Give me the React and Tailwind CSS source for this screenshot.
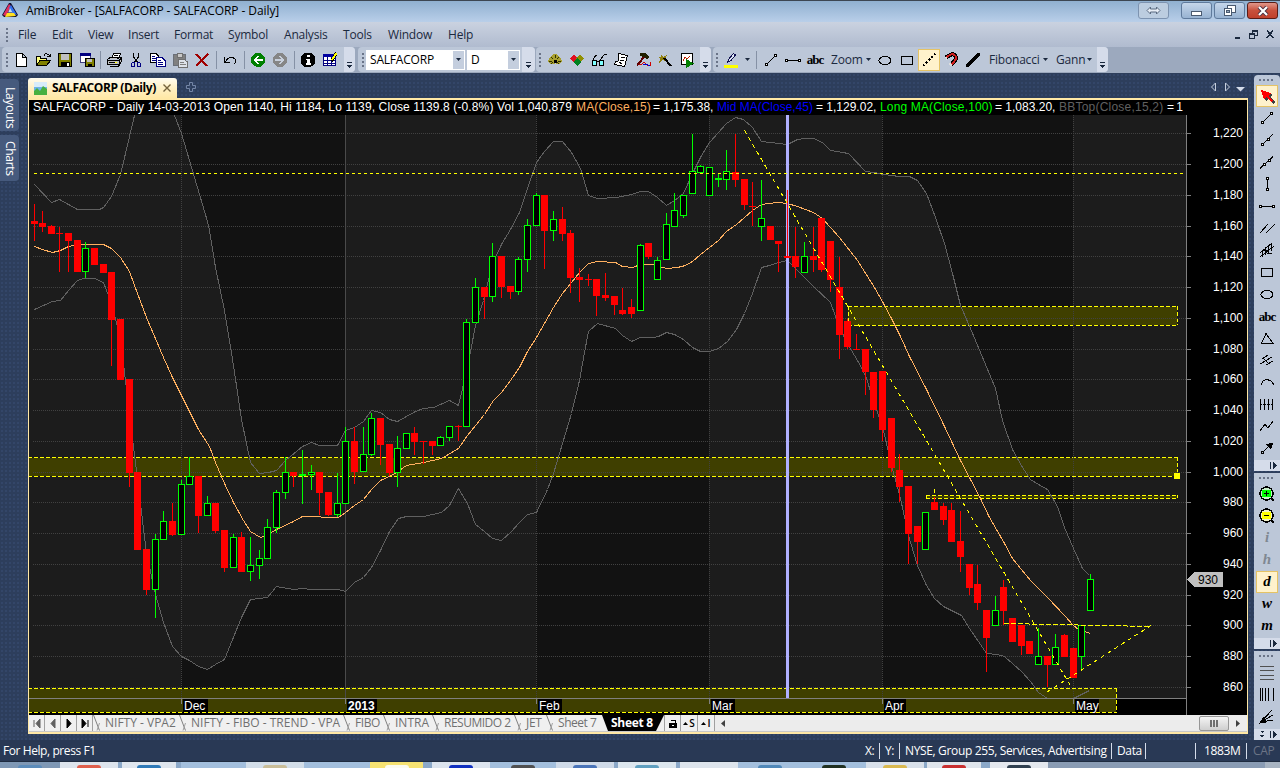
import React from 'react';

const PITCH = 8.659;

// kind, high, body top, body bottom, low
const CANDLES = [
  ['r', 204, 221, 224, 241], ['r', 211, 223, 227, 232], ['r', 225, 226, 234, 234], ['r', 227, 233, 234, 272],
  ['r', 233, 233, 241, 272], ['r', 240, 240, 272, 272], ['g', 242, 248, 272, 278], ['r', 248, 248, 265, 265],
  ['r', 264, 264, 273, 273], ['r', 272, 272, 320, 366], ['r', 319, 319, 380, 380], ['r', 379, 379, 473, 487],
  ['r', 472, 472, 550, 550], ['r', 549, 549, 590, 595], ['g', 534, 539, 590, 618], ['g', 511, 521, 540, 540],
  ['r', 503, 521, 535, 536], ['g', 480, 484, 535, 535], ['g', 457, 476, 485, 485], ['r', 476, 476, 516, 533],
  ['g', 496, 503, 516, 516], ['r', 503, 503, 531, 533], ['r', 530, 530, 568, 572], ['g', 534, 537, 568, 568],
  ['r', 532, 537, 572, 572], ['g', 537, 565, 572, 581], ['g', 550, 558, 566, 579], ['g', 519, 527, 559, 559],
  ['g', 490, 492, 528, 533], ['g', 457, 472, 493, 499], ['r', 472, 472, 476, 487], ['g', 450, 474, 476, 504],
  ['g', 465, 472, 475, 490], ['r', 472, 472, 493, 515], ['r', 492, 492, 515, 516], ['g', 473, 503, 515, 517],
  ['g', 427, 441, 504, 504], ['r', 427, 441, 472, 484], ['g', 427, 454, 472, 472], ['g', 413, 418, 455, 456],
  ['r', 418, 418, 445, 465], ['r', 444, 444, 473, 476], ['g', 436, 448, 473, 487], ['g', 433, 433, 449, 449],
  ['r', 427, 433, 442, 455], ['r', 441, 441, 442, 464], ['r', 441, 441, 446, 455], ['g', 436, 437, 446, 446],
  ['g', 426, 426, 438, 441], ['r', 425, 426, 427, 441], ['g', 319, 322, 427, 427], ['g', 278, 287, 323, 323],
  ['r', 287, 287, 297, 319], ['g', 243, 256, 297, 302], ['r', 256, 256, 287, 298], ['r', 286, 286, 292, 299],
  ['g', 257, 259, 292, 295], ['g', 219, 225, 260, 272], ['g', 193, 195, 226, 226], ['r', 195, 195, 231, 269],
  ['g', 211, 219, 231, 241], ['r', 207, 219, 234, 241], ['r', 230, 233, 278, 293], ['r', 268, 277, 280, 302],
  ['r', 274, 279, 280, 286], ['r', 279, 279, 296, 316], ['r', 273, 295, 298, 301], ['r', 296, 296, 305, 315],
  ['r', 288, 310, 314, 315], ['r', 299, 307, 314, 318], ['g', 244, 245, 311, 311], ['r', 243, 243, 257, 259],
  ['g', 257, 260, 280, 280], ['g', 213, 224, 260, 260], ['g', 193, 210, 227, 227], ['g', 195, 195, 216, 218],
  ['g', 134, 171, 194, 194], ['g', 165, 166, 173, 173], ['g', 167, 167, 196, 196], ['g', 174, 178, 180, 187],
  ['g', 150, 171, 180, 190], ['r', 134, 172, 180, 187], ['r', 179, 179, 205, 210], ['r', 182, 206, 207, 226],
  ['g', 180, 218, 227, 241], ['r', 226, 226, 240, 240], ['r', 241, 241, 244, 272], ['r', 190, 256, 258, 258],
  ['r', 227, 256, 267, 278], ['g', 242, 256, 273, 273], ['r', 227, 256, 260, 272], ['r', 218, 218, 270, 272],
  ['r', 241, 241, 280, 292], ['r', 257, 287, 335, 359], ['r', 319, 321, 347, 349], ['r', 334, 349, 350, 350],
  ['r', 349, 349, 372, 395], ['r', 372, 372, 410, 418], ['r', 371, 371, 430, 441], ['r', 418, 418, 468, 472],
  ['r', 454, 470, 487, 502], ['r', 486, 486, 534, 564], ['r', 526, 526, 542, 564], ['g', 512, 512, 550, 550],
  ['r', 497, 502, 510, 510], ['r', 503, 506, 520, 525], ['r', 503, 510, 542, 542], ['r', 511, 541, 557, 572],
  ['r', 564, 564, 588, 595], ['r', 565, 584, 603, 610], ['r', 610, 610, 638, 672], ['g', 596, 610, 626, 626],
  ['r', 580, 587, 611, 625], ['r', 618, 618, 642, 642], ['r', 625, 625, 646, 655], ['r', 641, 641, 654, 654],
  ['g', 628, 656, 665, 665], ['r', 656, 656, 665, 687], ['g', 634, 647, 665, 665], ['r', 634, 635, 657, 657],
  ['r', 648, 648, 678, 678], ['g', 625, 625, 657, 670], ['g', 574, 579, 611, 611],
];

const UPPER =
  '34,184 51,202 59,199 77,209 99,209 103,207 111,196 120,174 134,115 140,90 165,90 174,115 181,133 189,160 207,221 209,230 215,267 224,310 233,365 241,419 250,462 259,473 268,472 276,470 285,460 302,446 311,442 319,445 337,445 345,430 354,427 363,421 371,410 380,412 389,419 397,421 415,411 423,408 433,407 449,400 458,405 467,367 475,325 483,300 492,263 501,244 510,229 519,212 527,188 536,162 544,151 553,141 562,141 571,152 580,168 588,195 597,198 616,197 631,194 640,191 648,191 657,197 666,205 674,200 683,193 692,173 700,157 709,142 718,132 726,123 735,117 743,119 752,127 761,141 770,142 787,144 797,139 805,138 813,138 822,142 830,150 848,153 865,171 874,172 883,174 899,176 909,176 917,180 926,193 935,217 944,243 952,273 960,305 970,328 980,352 995,388 1002,420 1012,449 1022,467 1030,479 1038,484 1047,489 1057,506 1064,527 1073,548 1082,568 1089,575';

const LOWER =
  '34,309 52,301 60,300 68,290 77,280 83,278 94,278 103,282 111,303 120,338 129,414 137,478 146,553 155,594 163,622 172,646 181,656 189,660 198,666 207,669 215,664 224,659 241,617 250,599 267,597 276,586 293,589 303,588 310,589 338,589 345,591 354,582 363,577 371,567 380,550 389,531 398,518 406,516 423,516 432,514 441,512 449,505 458,488 467,503 475,524 484,531 492,538 501,540 510,532 519,522 527,514 536,512 547,489 553,473 562,443 571,413 579,380 584,352 588,331 597,323 615,328 622,335 631,341 640,337 653,337 658,336 666,332 674,334 683,339 692,347 700,351 709,351 718,348 727,341 736,329 744,313 752,293 761,267 769,265 778,262 787,260 797,270 813,286 830,302 839,327 848,345 857,360 865,375 874,403 883,430 891,465 900,498 908,535 917,565 926,585 934,598 943,606 953,611 961,615 969,628 978,641 986,653 997,654 1004,656 1013,664 1021,671 1030,681 1038,692 1047,698 1060,703 1073,698 1089,690';

const AVERAGE =
  '34,246 42,249 52,252 60,250 68,246 73,245 83,244 103,244 111,248 120,257 129,271 137,293 146,317 163,357 172,377 181,395 189,411 198,429 209,446 215,462 224,483 233,502 243,520 250,531 260,537 267,534 276,529 293,521 302,516 338,517 345,512 354,505 363,499 371,489 380,480 393,474 406,465 423,462 441,458 458,448 467,435 484,414 493,400 501,392 510,380 519,367 527,351 536,337 553,307 562,293 571,282 579,272 588,263 597,261 615,262 622,266 632,267 640,264 652,264 666,268 677,267 685,265 692,261 700,254 709,247 718,240 726,231 736,224 752,210 761,204 777,202 787,203 797,206 813,212 822,218 830,227 839,237 857,260 874,287 883,303 891,318 900,336 909,356 926,389 944,426 960,460 980,498 988,515 1004,543 1012,558 1021,569 1030,580 1038,588 1047,597 1064,615 1073,625 1078,629 1090,633';

const PRICES = [
  ['1,220', 133], ['1,200', 164], ['1,180', 195], ['1,160', 226], ['1,140', 256], ['1,120', 287], ['1,100', 318],
  ['1,080', 349], ['1,060', 379], ['1,040', 410], ['1,020', 441], ['1,000', 472], ['980', 502], ['960', 533],
  ['940', 564], ['920', 595], ['900', 625], ['880', 656], ['860', 687],
];

const MONTHS = [['Dec', 181, 25], ['2013', 345, 30], ['Feb', 536, 24], ['Mar', 709, 24], ['Apr', 882, 22], ['May', 1073, 24]];

const Zone = ({ x1, x2, y1, y2, open }) => (
  <g>
    <rect x={x1} y={y1 + 1} width={x2 - x1} height={y2 - y1 - 1} fill="#3f3f00" />
    <path
      d={`M${x1} ${y1 + 0.5}H${x2 + 1}M${x1} ${y2 + 0.5}H${x2 + 1}M${x2 + 0.5} ${y1}V${y2}${open ? '' : `M${x1 + 0.5} ${y1}V${y2}`}`}
      stroke="#ffff00"
      strokeDasharray="4 2"
      fill="none"
    />
  </g>
);

const Candle = ({ index, data }) => {
  const [kind, high, top, bottom, low] = data;
  const x = Math.floor(34 + PITCH * index);
  if (kind === 'r') {
    return (
      <g fill="#ff0000">
        <rect x={x} y={high} width="1" height={Math.max(low - high, 1)} />
        <rect x={x - 3} y={top} width="7" height={bottom - top} />
      </g>
    );
  }
  return (
    <g>
      <rect x={x} y={high} width="1" height={low - high} fill="#00ff00" />
      <rect x={x - 3} y={top} width="7" height={bottom - top} fill="#00ff00" />
      <rect x={x - 2} y={top + 1} width="5" height={Math.max(bottom - top - 2, 0)} fill="#000" />
    </g>
  );
};

const Chart = () => (
  <svg width="1218" height="600" viewBox="29 115 1218 600" shapeRendering="crispEdges" className="block shrink-0">
    <rect x="29" y="115" width="1218" height="600" fill="#000" />
    <rect x="29" y="115" width="1158" height="583" fill="#1c1c1c" />
    <rect x="181" y="115" width="164" height="583" fill="#121212" />
    <rect x="536" y="115" width="173" height="583" fill="#121212" />
    <rect x="882" y="115" width="191" height="583" fill="#121212" />
    <polygon points={`${UPPER} ${LOWER.split(' ').reverse().join(' ')}`} fill="#1c1c1c" />
    <rect x="29" y="698" width="1218" height="17" fill="#000" />

    <Zone x1={28} x2={1177} y1={457} y2={476} open />
    <Zone x1={848} x2={1177} y1={306} y2={325} />
    <Zone x1={926} x2={1177} y1={495} y2={498} />
    <Zone x1={28} x2={1116} y1={688} y2={712} open />

    <g stroke="#414141" strokeDasharray="1 1">
      {PRICES.map(([label, y]) => (
        <path key={label} d={`M33 ${y + 0.5}H1186`} />
      ))}
      {MONTHS.filter(([label]) => label !== '2013').map(([label, x]) => (
        <path key={label} d={`M${x + 0.5} 115V698`} />
      ))}
    </g>
    <path d="M345.5 115V698" stroke="#4a4a4a" />

    <g transform="translate(.5 .5)" fill="none">
      <polyline points={UPPER} stroke="#606060" />
      <polyline points={LOWER} stroke="#606060" />
      <polyline points={AVERAGE} stroke="#ffb060" />
    </g>
    <rect x="29" y="699" width="1087" height="13" fill="#3f3f00" />
    <rect x="786" y="115" width="3" height="583" fill="#b0b0ff" />
    {CANDLES.map((data, i) => (
      <Candle key={i} index={i} data={data} />
    ))}

    <g stroke="#ffff00" fill="none">
      <path d="M34 173.5H1186" strokeDasharray="3 3" />
      <path d="M744.5 130.5L1070 685" strokeDasharray="4 4" />
      <path d="M1004 623.5L1151 626.5" strokeDasharray="5 2" />
      <path d="M1047 692L1151 625.5" strokeDasharray="4 4" />
      <path d="M934.5 489V493" />
    </g>
    <rect x="1174" y="473" width="6" height="6" fill="#ffff00" />

    <g stroke="#808080" fill="none">
      <path d="M29 698.5H1187M1186.5 115V715" />
      {PRICES.map(([label, y]) => (
        <path key={label} d={`M1187 ${y + 0.5}H1191`} />
      ))}
      {MONTHS.map(([label, x]) => (
        <path key={label} d={`M${x + 0.5} 699V704`} />
      ))}
    </g>

    <g fill="#fff" fontFamily="Liberation Sans, sans-serif" fontSize="12">
      {PRICES.map(([label, y]) => (
        <text key={label} x="1243" y={y + 4} textAnchor="end">
          {label}
        </text>
      ))}
      {MONTHS.map(([label, x, w]) => (
        <g key={label}>
          <rect x={x + 2} y="699" width={w} height="13" fill="#000" />
          <text x={x + 3} y="710" fontWeight={label === '2013' ? 700 : 400}>
            {label}
          </text>
        </g>
      ))}
    </g>
    <path d="M1187 579.5L1195 572H1223V587H1195Z" fill="#c0c0c0" />
    <text x="1198" y="584" fill="#000" fontFamily="Liberation Sans, sans-serif" fontSize="12">
      930
    </text>
  </svg>
);

const ICONS = {
  new: <path d="M3.5 1.5H9.5L13.5 5.5V14.5H3.5ZM9.5 1.5V5.5H13.5" fill="#fff" stroke="#000" />,
  open: (
    <>
      <path d="M1.5 13.5V4.5H5.5V6.5H11.5V8.5" fill="#ffff80" stroke="#000" />
      <path d="M1.5 13.5L5 8.5H15.5L11.5 13.5Z" fill="#808000" stroke="#000" />
      <path d="M9 3.5C10 1 13 1 14.5 4M12 4.5H15V1.5" fill="none" stroke="#000" />
    </>
  ),
  save: (
    <>
      <rect x="1.5" y="1.5" width="13" height="13" fill="#808000" stroke="#000" />
      <rect x="4" y="2" width="8" height="6" fill="#c0c0c0" />
      <rect x="4" y="10" width="9" height="4" fill="#000" />
      <rect x="10" y="11" width="2" height="3" fill="#fff" />
    </>
  ),
  saveAll: (
    <>
      <rect x="1.5" y="1.5" width="10" height="9" fill="#fff" stroke="#404080" />
      <rect x="1" y="1" width="11" height="3" fill="#000080" />
      <rect x="6.5" y="6.5" width="9" height="8" fill="#808000" stroke="#000" />
      <rect x="8" y="7" width="5" height="3" fill="#c0c0c0" />
      <rect x="9" y="12" width="4" height="3" fill="#000" />
    </>
  ),
  print: (
    <>
      <path d="M5.5 6.5L7.5 1.5H14.5L12.5 6.5Z" fill="#fff" stroke="#000" />
      <path d="M1.5 7.5L4 5.5H15L13.5 8.5H1.5V12.5H13.5L15.5 9V6M13.5 8.5V12.5" fill="#c0c0c0" stroke="#000" />
      <path d="M8 3.5H12M7 5H11M3.5 14.5H12L14 12.5M3 10.5H11" stroke="#000" fill="none" />
      <rect x="9" y="10" width="2" height="1" fill="#ffff00" />
    </>
  ),
  cut: (
    <>
      <path d="M5.5 1V5L9.5 10M10.5 1V5L6.5 10" stroke="#000" fill="none" />
      <path d="M4.5 10.5H6.5V14.5H3.5V11.5ZM9.5 10.5H11.5L12.5 12V14.5H9.5Z" stroke="#000080" fill="none" />
    </>
  ),
  copy: (
    <>
      <path d="M.5 1.5H6L8.5 4V10.5H.5Z" fill="#fff" stroke="#000" />
      <path d="M2 4.5H5M2 6.5H6M2 8.5H6" stroke="#000080" />
      <path d="M6.5 5.5H12L15.5 9V14.5H6.5Z" fill="#fff" stroke="#000080" />
      <path d="M8 8.5H11M8 10.5H13M8 12.5H13" stroke="#000080" />
    </>
  ),
  paste: (
    <>
      <rect x="1.5" y="2.5" width="12" height="11" fill="#808080" stroke="#6a6f78" />
      <rect x="5" y="1" width="5" height="4" fill="#c8c8c8" stroke="#707070" />
      <path d="M6.5 7.5H12L15.5 10V15.5H6.5Z" fill="#dde2ea" stroke="#707070" />
      <path d="M8 10.5H12M8 12.5H14" stroke="#808080" />
    </>
  ),
  remove: <path d="M2 2L13 14M14 2L2 14" stroke="#a00000" strokeWidth="2" />,
  undo: <path d="M2.5 5V10.5H8M3 10L6 6.5C9 4.5 14 5.5 13.5 9C13.5 10.5 13 11 12 12" stroke="#000" fill="none" />,
  back: (
    <>
      <circle cx="8" cy="8" r="7" fill="#008000" />
      <path d="M13 8H5M8.5 4L4.5 8L8.5 12" stroke="#fff" strokeWidth="2" fill="none" />
    </>
  ),
  forward: (
    <>
      <circle cx="8" cy="8" r="7" fill="#868686" />
      <path d="M3 8H11M7.5 4L11.5 8L7.5 12" stroke="#c8d0dc" strokeWidth="2" fill="none" />
    </>
  ),
  info: (
    <>
      <circle cx="8" cy="8" r="7.5" fill="#000" />
      <path d="M7 3H10V5H7ZM6 7H10V11H11V13H6V11H7V8H6Z" fill="#fff" />
    </>
  ),
  table: (
    <>
      <rect x="1.5" y="2.5" width="12" height="11" fill="#fff" stroke="#000080" />
      <rect x="1" y="2" width="13" height="3" fill="#0000a0" />
      <path d="M2 8.5H13M2 11.5H13M5.5 5V13M9.5 5V13" stroke="#000080" />
      <path d="M14.5 1L9.5 9" stroke="#000" strokeWidth="3" />
      <path d="M14.5 1L10 8" stroke="#ffff00" strokeWidth="2" />
    </>
  ),
  gear: (
    <>
      <path d="M6 2H10L11 4L14 6L15 10L12 12H9L8 11L7 12H4L1 10L2 6L5 4Z" fill="#a8a030" />
      <path d="M8 3V6M4 5L6 7M12 5L10 7M2 9H5M14 9H11M4 12L6 10M12 12L10 10" stroke="#303000" />
      <path d="M6.5 7.5H9.5V10.5H6.5Z" fill="#000" />
    </>
  ),
  diamonds: (
    <>
      <path d="M5 2L9 6.5L5 11L1 6.5Z" fill="#e01020" />
      <path d="M11 2L15 6.5L11 11L7 6.5Z" fill="#909000" />
      <path d="M8 6L12 10L8 14L4 10Z" fill="#008020" />
    </>
  ),
  glasses: (
    <>
      <path d="M1.5 9L4 4.5L6.5 2.5M9 8L13 3L15.5 2" stroke="#000" fill="none" />
      <rect x="1.5" y="8.5" width="4" height="5" fill="#80ffff" stroke="#000" />
      <rect x="8.5" y="8.5" width="4" height="5" fill="#80ffff" stroke="#000" />
      <path d="M5.5 9.5H8.5" stroke="#000" />
    </>
  ),
  scroll: (
    <>
      <path d="M5.5 1.5L14.5 3.5L11.5 14.5L1.5 12.5L3 9H5Z" fill="#fff" stroke="#000" />
      <path d="M8 5L12 6M7 8L11 9M6 10.5L9 11.5" stroke="#000" />
    </>
  ),
  hammer: (
    <>
      <path d="M9 5L2 13.5" stroke="#600000" strokeWidth="2" />
      <path d="M5 1H10L14 5L12 8L9 5L5 4Z" fill="#202000" />
      <path d="M4 12H7L9 10L12 13H15V10" stroke="#d00000" fill="none" />
      <path d="M8 13C10 10 12 14 15 13" stroke="#0000d0" fill="none" />
    </>
  ),
  wand: (
    <>
      <path d="M4 2L6 5L10 3L8 7L9 9L5 8L2 11L3 7L1 5H4Z" fill="#908010" />
      <path d="M7 6L14 14" stroke="#000" strokeWidth="2" />
    </>
  ),
  run: (
    <>
      <rect x="2.5" y="1.5" width="11" height="11" fill="#fff" stroke="#000" />
      <path d="M4 9L6 5L8 7L11 4" stroke="#c02000" fill="none" />
      <path d="M7 7L15 11.5L7 16Z" fill="#008000" />
    </>
  ),
  marker: (
    <>
      <path d="M5.5 7.5L10.5 1.5L12.500 3L8 8.500L4.500 10.500Z" fill="#dfe8f4" stroke="#101050" />
      <rect x="1" y="13" width="14" height="3" fill="#ffff00" />
    </>
  ),
  segment: (
    <>
      <path d="M4 12L12 4" stroke="#000" />
      <path d="M2.5 11.5H4.5V13.5H2.5ZM11.5 2.5H13.5V4.5H11.5Z" fill="#fff" stroke="#000" />
    </>
  ),
  ray: (
    <>
      <path d="M2 14L14 2" stroke="#000" />
      <path d="M2.5 11.5H4.5V13.5H2.5ZM8.5 6.5H10.5V8.5H8.5Z" fill="#fff" stroke="#000" />
    </>
  ),
  extended: (
    <>
      <path d="M1 14.5L14 2.5" stroke="#000" />
      <path d="M4.5 9.5H6.5V11.5H4.5ZM9.5 5.5H11.5V7.5H9.5Z" fill="#fff" stroke="#000" />
    </>
  ),
  vertical: (
    <>
      <path d="M8.5 3V13" stroke="#000" />
      <path d="M7.5 1.5H9.5V3.5H7.5ZM7.5 12.5H9.5V14.5H7.5Z" fill="#fff" stroke="#000" />
    </>
  ),
  horizontal: (
    <>
      <path d="M3 8.5H14" stroke="#000" />
      <path d="M.5 7.5H2.5V9.5H.5ZM13.5 7.5H15.5V9.5H13.5Z" fill="#fff" stroke="#000" />
    </>
  ),
  parallel: <path d="M1 13L9 4M7 13L16 4" stroke="#000" />,
  regression: <path d="M1 11L13 1M1 15L15 4M3 15L3 9M6 13V5M9 11V3M12 9V2M5 8H8M8 11H13" stroke="#000" fill="none" />,
  rect: <rect x="2.5" y="4.5" width="11" height="8" fill="none" stroke="#000" />,
  ellipse: <ellipse cx="8" cy="8.5" rx="6" ry="4" fill="none" stroke="#000" />,
  triangle: <path d="M2.5 13.5L7 3.5L14 13.5Z" fill="none" stroke="#000" />,
  pitchfork: <path d="M3 7L9 3M1 12L13 5M7 13L14 9M4 6L10 12" stroke="#000" fill="none" />,
  arc: <path d="M2.5 11C3 4 13 4 14.5 11" fill="none" stroke="#000" />,
  cycles: (
    <>
      <path d="M1.5 3V14M5.5 3V14M9.5 3V14M13.5 3V14" stroke="#000" />
      <path d="M2 8.500H13" stroke="#000" strokeDasharray="1 1" />
    </>
  ),
  zigzag: <path d="M1 13L6 6L9 10L14 3" fill="none" stroke="#000" />,
  arrow: (
    <>
      <path d="M4 12L10 6" stroke="#000" />
      <path d="M2.5 11.5H4.5V13.5H2.5Z" fill="none" stroke="#000" />
      <path d="M7 4L14 3L12 10Z" fill="#000" />
    </>
  ),
  dashes: <path d="M2 14L14 2" stroke="#000" strokeWidth="2" strokeDasharray="2 2" />,
  magnet: (
    <>
      <path d="M3 5.5L7 3C12 .5 15 6 11.5 9L8 13" fill="none" stroke="#000" strokeWidth="4" />
      <path d="M3 5.5L7 3C12 .5 15 6 11.5 9L8 13" fill="none" stroke="#d02020" strokeWidth="2" />
      <path d="M2.5 5L4 7.5M6.500 11.500L9 14" stroke="#ddd" strokeWidth="1.500" />
    </>
  ),
  pen: <path d="M2.5 13.5L13.5 2.5" stroke="#000" strokeWidth="3.5" strokeLinecap="round" />,
  pointer: (
    <>
      <path d="M3 2L13 6L10 8L15 13L13 15L8 10L6 13Z" fill="#404040" transform="translate(1 1)" />
      <path d="M2 2L12 5L9 8L14 13L12 14L7 9L5 12Z" fill="#ff0000" />
    </>
  ),
  zoomIn: (
    <>
      <circle cx="7.5" cy="7.5" r="6.5" fill="#c8f0c8" stroke="#000" strokeWidth="1.5" />
      <rect x="3" y="4" width="9" height="7" fill="#00ff00" />
      <path d="M5 7.5H10M7.5 5V10M12 12L15 15" stroke="#000" strokeWidth="1.5" />
    </>
  ),
  zoomOut: (
    <>
      <circle cx="7.5" cy="7.5" r="6.5" fill="#f0f0c8" stroke="#000" strokeWidth="1.5" />
      <rect x="3" y="4" width="9" height="7" fill="#ffff00" />
      <path d="M5 7.5H10M12 12L15 15" stroke="#000" strokeWidth="1.5" />
    </>
  ),
  rows: <path d="M1 2.5H15M1 6.5H15M1 11.5H15M1 15.5H15" stroke="#505050" />,
  bars: <path d="M1.5 2V15M3.5 2V15M6.5 2V15M9.5 2V15M14.5 2V15" stroke="#000" />,
  fan: <path d="M2 14L13 2M2 14L14 7M2 14L14 12M1 15L5 9L7 14Z" stroke="#000" fill="none" />,
};

const Icon = ({ name }) => (
  <svg width="16" height="16" viewBox="0 0 16 16" shapeRendering="crispEdges" className="block shrink-0">
    {ICONS[name]}
  </svg>
);

const Tool = ({ name, active }) => (
  <div
    className={`flex h-[22px] w-[22px] shrink-0 items-center justify-center ${
      active ? 'border border-[#e5c365] bg-[#fff2cc]' : ''
    }`}
  >
    <Icon name={name} />
  </div>
);

const Letter = ({ children, active, dim }) => (
  <div
    className={`flex h-[22px] w-[22px] shrink-0 items-center justify-center pb-px font-['Liberation_Serif'] text-[15px] leading-none font-bold italic ${
      active ? 'border border-[#e5c365] bg-[#fff2cc]' : ''
    } ${dim ? 'text-[#7f8792]' : 'text-black'}`}
  >
    {children}
  </div>
);

const Abc = () => (
  <div className="flex h-[22px] w-[22px] shrink-0 items-center justify-center font-['Liberation_Serif'] text-[13px] leading-none font-bold tracking-[-1px] text-black">
    abc
  </div>
);

const Grip = ({ className }) => (
  <div className={`flex shrink-0 flex-col gap-[2px] ${className}`}>
    {[0, 1, 2, 3].map((i) => (
      <i key={i} className="block h-[2px] w-[2px] bg-[#6a7488]" />
    ))}
  </div>
);

const SideGrip = () => (
  <div className="flex h-[10px] w-full shrink-0 items-center gap-[2px] pl-[5px]">
    {[0, 1, 2, 3].map((i) => (
      <i key={i} className="block h-[2px] w-[2px] bg-[#6a7488]" />
    ))}
  </div>
);

const Sep = ({ className }) => (
  <div className={`flex shrink-0 justify-center ${className || 'w-[6px]'}`}>
    <div className="h-[18px] w-px bg-[#8591a5]" />
  </div>
);

const Caret = ({ className }) => (
  <svg width="5" height="3" viewBox="0 0 5 3" className={`shrink-0 ${className || ''}`}>
    <path d="M0 0H5L2.5 3Z" fill="#1b293e" />
  </svg>
);

const Overflow = ({ className }) => (
  <div className={`flex h-[25px] shrink-0 items-end justify-center rounded-r-sm bg-[#d5dcea] pb-[4px] ${className || 'w-[11px]'}`}>
    <svg width="5" height="6" viewBox="0 0 5 6" shapeRendering="crispEdges">
      <path d="M0 0H5V1H0ZM0 3H5L2.5 6Z" fill="#1b293e" />
    </svg>
  </div>
);

const SideOverflow = ({ both }) => (
  <div className="mt-auto flex h-[11px] w-full shrink-0 items-center justify-end gap-[6px] bg-[#d5dcea] pr-[3px]">
    {both && (
      <svg width="4" height="7" viewBox="0 0 4 7" shapeRendering="crispEdges">
        <path d="M0 0H4L2 2ZM0 4H4L2 7Z" fill="#1b293e" />
      </svg>
    )}
    <svg width="7" height="7" viewBox="0 0 7 7" shapeRendering="crispEdges">
      <path d="M0 0H1V7H0ZM3 0L7 3.5L3 7Z" fill="#1b293e" />
    </svg>
  </div>
);

const TitleBar = () => (
  <div className="flex h-[22px] shrink-0 items-start border-t border-[#3c4652] bg-linear-to-b from-[#90b0d0] to-[#b9cfe9]">
    <svg width="18" height="17" viewBox="0 0 18 17" className="mt-px ml-px shrink-0">
      <path d="M8 1L1 13L3 15H15L17 13L10 1Z" fill="#101030" />
      <path d="M8 2L2 13L5 14L10 4Z" fill="#e03060" />
      <path d="M10 3L16 13L12 12L8 6Z" fill="#3070f0" />
      <path d="M4 15L6 11H13L15 14Z" fill="#ffe020" />
      <path d="M9 6L11.5 10.5H7Z" fill="#c0d8f0" />
    </svg>
    <span className="mt-[2px] ml-[7px] w-[260px] text-[12px] leading-4 tracking-[-0.08px] whitespace-nowrap text-black">
      AmiBroker - [SALFACORP - SALFACORP - Daily]
    </span>
    <div className="mt-px ml-auto flex pr-[2px]">
      <div className="mr-[12px] flex h-[17px] w-[31px] items-center justify-center rounded-[3px] border border-[#7d93b0] bg-[#bccde0]">
        <svg width="15" height="9" viewBox="0 0 15 9">
          <path d="M1 4.5L4.5 1V3H10.5V1L14 4.5L10.5 8V6H4.5V8Z" fill="#e8eef6" stroke="#5a6a80" />
        </svg>
      </div>
      <div className="mr-[2px] flex h-[17px] w-[31px] items-center justify-center rounded-[3px] border border-[#5f7a9c] bg-linear-to-b from-[#c5d6ea] to-[#98b3d2]">
        <div className="mt-[5px] h-[5px] w-[11px] border border-[#4a5a70] bg-white" />
      </div>
      <div className="mr-[2px] flex h-[17px] w-[31px] items-center justify-center rounded-[3px] border border-[#5f7a9c] bg-linear-to-b from-[#c5d6ea] to-[#98b3d2]">
        <svg width="12" height="11" viewBox="0 0 12 11" shapeRendering="crispEdges">
          <rect x="3.5" y=".5" width="8" height="7" fill="#fff" stroke="#4a5a70" />
          <rect x=".5" y="3.5" width="7" height="7" fill="#fff" stroke="#4a5a70" />
          <rect x="2.5" y="5.5" width="3" height="2" fill="#9ab" stroke="#4a5a70" />
        </svg>
      </div>
      <div className="flex h-[17px] w-[31px] items-center justify-center rounded-[3px] border border-[#5a1c16] bg-linear-to-b from-[#e0968a] via-[#c8503c] to-[#c0402c]">
        <svg width="12" height="10" viewBox="0 0 12 10">
          <path d="M2 1L10 9M10 1L2 9" stroke="#4a3040" strokeWidth="4" />
          <path d="M2 1L10 9M10 1L2 9" stroke="#fff" strokeWidth="2.2" />
        </svg>
      </div>
    </div>
  </div>
);

const MENU = [
  ['File', 'w-[34px]'], ['Edit', 'w-[36px]'], ['View', 'w-[40px]'], ['Insert', 'w-[46px]'], ['Format', 'w-[54px]'],
  ['Symbol', 'w-[56px]'], ['Analysis', 'w-[59px]'], ['Tools', 'w-[45px]'], ['Window', 'w-[60px]'], ['Help', 'w-[30px]'],
];

const MenuBar = () => (
  <div className="flex h-[25px] shrink-0 items-center bg-linear-to-b from-[#cad2e0] to-[#b0bbcf] text-[12px] tracking-[-0.2px] text-[#1b293e]">
    <Grip className="mr-[10px] ml-[6px]" />
    {MENU.map(([label, width]) => (
      <span key={label} className={`shrink-0 whitespace-nowrap ${width}`}>
        {label}
      </span>
    ))}
    <svg width="40" height="11" viewBox="0 0 40 11" shapeRendering="crispEdges" className="mr-[6px] ml-auto">
      <path d="M1 8H6V10H1Z" fill="#1b293e" />
      <path d="M18.5 4V1.5H23.5V6.5H21M15 4.5H20.5V9.5H15.5V4.5M18 2H24M15 5H20" fill="none" stroke="#1b293e" />
      <path d="M33 1.5L39 9M39 1.5L33 9" fill="none" stroke="#1b293e" strokeWidth="1.5" />
    </svg>
  </div>
);

const Combo = ({ value, className }) => (
  <div className={`flex h-[20px] shrink-0 items-stretch border border-white bg-white ${className}`}>
    <span className="flex-1 pl-[3px] text-[12px] leading-[17px] tracking-[-0.2px] text-black">{value}</span>
    <div className="flex w-[11px] items-center justify-center bg-[#c4cede]">
      <Caret />
    </div>
  </div>
);

const ToolBars = () => (
  <div className="flex h-[26px] shrink-0 items-start bg-[#9ca9be] pl-[2px] text-[12px] tracking-[-0.2px] text-[#1b293e]">
    <div className="mr-[3px] flex h-[25px] w-[353px] items-center rounded-sm bg-[#bcc7d8]">
      <Grip className="mr-[2px] ml-[4px]" />
      {['new', 'open', 'save', 'saveAll'].map((n) => <Tool key={n} name={n} />)}
      <Sep className="w-[5px]" />
      {['print', 'cut', 'copy', 'paste', 'remove'].map((n) => <Tool key={n} name={n} />)}
      <Sep />
      <Tool name="undo" />
      <Sep />
      <Tool name="back" />
      <Tool name="forward" />
      <Sep />
      <Tool name="info" />
      <Tool name="table" />
      <Overflow className="ml-auto w-[11px]" />
    </div>
    <div className="mr-px flex h-[25px] w-[177px] items-center rounded-sm bg-[#bcc7d8]">
      <Grip className="mr-[2px] ml-[4px]" />
      <Combo value="SALFACORP" className="mr-[2px] w-[99px]" />
      <Combo value="D" className="w-[53px]" />
      <Overflow className="ml-auto w-[13px]" />
    </div>
    <div className="mr-[2px] flex h-[25px] w-[175px] items-center rounded-sm bg-[#bcc7d8]">
      <Grip className="mr-[3px] ml-[3px]" />
      {['gear', 'diamonds', 'glasses', 'scroll', 'hammer', 'wand', 'run'].map((n) => <Tool key={n} name={n} />)}
      <Overflow className="ml-auto w-[11px]" />
    </div>
    <div className="flex h-[25px] w-[395px] items-center rounded-sm bg-[#bcc7d8]">
      <Grip className="mr-[2px] ml-[3px]" />
      <Tool name="marker" />
      <Caret className="mx-[3px]" />
      <Sep className="w-[7px]" />
      <Tool name="segment" />
      <Tool name="horizontal" />
      <Abc />
      <span className="ml-[5px] w-[35px]">Zoom</span>
      <Caret className="mr-[3px]" />
      <Tool name="ellipse" />
      <Tool name="rect" />
      <Tool name="dashes" active />
      <Tool name="magnet" />
      <Tool name="pen" />
      <span className="ml-[5px] w-[54px]">Fibonacci</span>
      <Caret />
      <span className="ml-[8px] w-[31px]">Gann</span>
      <Caret />
      <Overflow className="ml-auto w-[11px]" />
    </div>
  </div>
);

const SideBar = () => (
  <div className="flex w-[26px] shrink-0 flex-col items-center">
    <div className="mt-[2px] flex h-[396px] w-full shrink-0 flex-col items-center rounded-t-sm bg-[#bcc7d8]">
      <SideGrip />
      <Tool name="pointer" active />
      {['segment', 'ray', 'extended', 'vertical', 'horizontal', 'parallel', 'regression', 'rect', 'ellipse'].map((n) => (
        <Tool key={n} name={n} />
      ))}
      <Abc />
      {['triangle', 'pitchfork', 'arc', 'cycles', 'zigzag', 'arrow'].map((n) => (
        <Tool key={n} name={n} />
      ))}
      <SideOverflow />
    </div>
    <div className="mt-[2px] flex h-[176px] w-full shrink-0 flex-col items-center bg-[#bcc7d8]">
      <SideGrip />
      <Tool name="zoomIn" />
      <Tool name="zoomOut" />
      <Letter dim>i</Letter>
      <Letter dim>h</Letter>
      <Letter active>d</Letter>
      <Letter>w</Letter>
      <Letter>m</Letter>
      <SideOverflow />
    </div>
    <div className="mt-[2px] flex h-[89px] w-full shrink-0 flex-col items-center bg-[#bcc7d8]">
      <SideGrip />
      <Tool name="rows" />
      <Tool name="bars" />
      <Tool name="fan" />
      <SideOverflow both />
    </div>
  </div>
);

const ChartTitle = () => (
  <div className="flex h-[15px] shrink-0 bg-black pl-[4px] font-['Liberation_Sans'] text-[12px] leading-[15px]">
    <div className="flex w-[1148px] whitespace-pre text-white">
      <span className="w-[543px] shrink-0 tracking-[0.12px]">
        SALFACORP - Daily 14-03-2013 Open 1140, Hi 1184, Lo 1139, Close 1139.8 (-0.8%) Vol 1,040,879
      </span>
      <span className="w-[77px] shrink-0 tracking-[0.13px] text-[#ffb060]">MA(Close,15)</span>
      <span className="w-[64px] shrink-0">= 1,175.38,</span>
      <span className="w-[99px] shrink-0 text-[#0000ff]">Mid MA(Close,45)</span>
      <span className="w-[64px] shrink-0">= 1,129.02,</span>
      <span className="w-[115px] shrink-0 tracking-[0.15px] text-[#00ff00]">Long MA(Close,100)</span>
      <span className="w-[64px] shrink-0">= 1,083.20,</span>
      <span className="w-[108px] shrink-0 tracking-[0.22px] text-[#606060]">BBTop(Close,15,2)</span>
      <span className="shrink-0 tracking-[-0.5px]">= 1</span>
    </div>
  </div>
);

const SHEETS = [
  ['NIFTY - VPA2', 'w-[86px]'], ['NIFTY - FIBO - TREND - VPA', 'w-[164px]'], ['FIBO', 'w-[40px] tracking-[-0.4px]'],
  ['INTRA', 'w-[49px]'], ['RESUMIDO 2', 'w-[82px] tracking-[-0.5px]'], ['JET', 'w-[32px] tracking-[-0.3px]'],
  ['Sheet 7', 'w-[49px] tracking-[-0.45px]'],
];

const Slant = () => (
  <svg width="7" height="16" viewBox="0 0 7 16" className="shrink-0">
    <path d="M.5 0L6.5 15.5" stroke="#808080" />
    <path d="M6.5 8L4 15.5" stroke="#a0a0a0" />
  </svg>
);

const SheetTabs = () => (
  <div className="flex h-[17px] shrink-0 items-stretch border-b border-[#c8c8c8] bg-[#f0f0f0] text-[12px] leading-[15px] text-[#707070]">
    {['M2 1V8M8 0L4 4.5L8 9Z', 'M7 0L3 4.5L7 9Z', 'M3 0L7 4.5L3 9Z', 'M8 1V8M2 0L6 4.5L2 9Z'].map((d, i) => (
      <div key={d} className="flex w-[16px] shrink-0 items-center justify-center border-r border-[#a0a0a0]">
        <svg width="10" height="9" viewBox="0 0 10 9">
          <path d={d} fill={i < 2 ? '#606060' : '#000'} stroke={i < 2 ? '#606060' : '#000'} />
        </svg>
      </div>
    ))}
    {SHEETS.map(([label, width]) => (
      <div key={label} className={`flex shrink-0 whitespace-nowrap ${width}`}>
        <Slant />
        <span className="ml-[5px]">{label}</span>
      </div>
    ))}
    <div className="relative ml-[3px] w-[66px] shrink-0">
      <svg width="66" height="16" viewBox="0 0 66 16" className="block">
        <path d="M4 0H66L58 16H10Z" fill="#000" />
      </svg>
      <span className="absolute top-0 left-[13px] font-bold tracking-[-0.3px] whitespace-nowrap text-white">Sheet 8</span>
    </div>
    <div className="flex w-[17px] shrink-0 items-center justify-center border-x border-[#a0a0a0]">
      <svg width="8" height="9" viewBox="0 0 8 9" shapeRendering="crispEdges">
        <path d="M2.5 2V1.5H6.5V4" fill="none" stroke="#000" />
        <rect x="0" y="4" width="8" height="5" fill="#000" />
        <rect x="3" y="6" width="2" height="1" fill="#fff" />
      </svg>
    </div>
    {['S', 'I'].map((c) => (
      <div key={c} className="flex w-[17px] shrink-0 items-center justify-center border-r border-[#a0a0a0] text-[10px] font-semibold text-black">
        <svg width="5" height="3" viewBox="0 0 5 3" className="mr-px"><path d="M0 3H5L2.5 0Z" /></svg>
        {c}
      </div>
    ))}
    <div className="flex flex-1 items-center bg-[#ececec]">
      <svg width="4" height="7" viewBox="0 0 4 7" className="ml-[6px]"><path d="M4 0V7L0 3.5Z" fill="#404040" /></svg>
      <div className="ml-auto flex h-[15px] w-[30px] items-center justify-center gap-px rounded-[2px] border border-[#979797] bg-linear-to-b from-[#f4f4f4] to-[#cfcfcf]">
        <i className="h-[7px] w-[2px] bg-[#707070]" />
        <i className="h-[7px] w-[2px] bg-[#707070]" />
        <i className="h-[7px] w-[2px] bg-[#707070]" />
      </div>
      <svg width="4" height="7" viewBox="0 0 4 7" className="mr-[7px] ml-[7px]"><path d="M0 0V7L4 3.5Z" fill="#404040" /></svg>
    </div>
  </div>
);

const TabStrip = () => (
  <div className="flex h-[25px] shrink-0 items-end">
    <div className="flex h-[20px] w-[149px] items-center rounded-t-[3px] bg-linear-to-b from-[#fffcf0] via-[#fff0c4] to-[#ffe8a6] pl-[6px]">
      <svg width="13" height="13" viewBox="0 0 13 13" className="shrink-0">
        <rect width="13" height="13" fill="#6fb4e8" />
        <rect y="0" width="13" height="5" fill="#d8ecfa" />
        <path d="M0 9L3 6L6 9L9 4L13 7V13H0Z" fill="#48b040" />
      </svg>
      <span className="ml-[5px] w-[111px] text-[12px] leading-4 font-bold tracking-[-0.4px] whitespace-nowrap text-black">
        SALFACORP (Daily)
      </span>
      <svg width="8" height="8" viewBox="0 0 8 8" className="shrink-0"><path d="M.5 .5L7.5 7.5M7.5 .5L.5 7.5" stroke="#75633d" strokeWidth="1.4" /></svg>
    </div>
    <svg width="12" height="12" viewBox="0 0 12 12" className="mb-[5px] ml-[8px]">
      <path d="M4.5 1.5H7.5V4.5H10.5V7.5H7.5V10.5H4.5V7.5H1.5V4.5H4.5Z" fill="none" stroke="#7486a6" />
    </svg>
    <svg width="36" height="10" viewBox="0 0 36 10" className="mr-[1px] mb-[6px] ml-auto">
      <path d="M4.5 1V9L.5 5Z" fill="none" stroke="#c5cedd" />
      <path d="M14.5 1V9L18.5 5Z" fill="none" stroke="#c5cedd" />
      <path d="M25 5H34L29.5 9.5Z" fill="#d5dcea" />
    </svg>
  </div>
);

const StatusBar = () => (
  <div className="flex h-[21px] shrink-0 items-center bg-[#293955] text-[12px] tracking-[-0.35px] whitespace-nowrap text-white">
    <span className="pl-[3px] tracking-[-0.42px]">For Help, press F1</span>
    <span className="ml-auto w-[14px]">X:</span>
    <div className="mr-[5px] h-[16px] w-px bg-[#d5dcea]" />
    <span className="w-[14px]">Y:</span>
    <div className="mr-[5px] h-[16px] w-px bg-[#d5dcea]" />
    <span className="w-[206px]">NYSE, Group 255, Services, Advertising</span>
    <div className="mr-[5px] h-[16px] w-px bg-[#d5dcea]" />
    <span className="w-[28px]">Data</span>
    <div className="mr-[49px] h-[16px] w-px bg-[#d5dcea]" />
    <div className="mr-[8px] h-[16px] w-px bg-[#d5dcea]" />
    <span className="w-[42px]">1883M</span>
    <div className="mr-[6px] h-[16px] w-px bg-[#d5dcea]" />
    <span className="w-[27px] text-[#6b7486]">CAP</span>
  </div>
);

const TASKS = [
  ['w-[60px]', 'bg-[#7f98b5]', 'bg-[#5c8cba]'], ['w-[58px]', 'bg-[#dde4ec]', 'bg-[#e0604c]'], ['w-[4px]', 'bg-[#8ba8c8]', ''],
  ['w-[54px]', 'bg-[#dfe6ee]', 'bg-[#2f7ab8]'], ['w-[5px]', 'bg-[#8ba8c8]', ''], ['w-[65px]', 'bg-[#a3bfdd]', ''],
  ['w-[58px]', 'bg-[#d3dee9]', 'bg-[#c9bd98]'], ['w-[66px]', 'bg-[#a3bfdd]', ''], ['w-[53px]', 'bg-[#f6e272]', 'bg-[#fbfbf0]'],
  ['w-[9px]', 'bg-[#8ba8c8]', ''], ['w-[58px]', 'bg-[#dce4ee]', 'bg-[#1030c0]'], ['w-[66px]', 'bg-[#a3bfdd]', 'bg-[#505050]'],
  ['w-[58px]', 'bg-[#cfdae8]', 'bg-[#4a74b8]'], ['w-[4px]', 'bg-[#8ba8c8]', ''], ['w-[58px]', 'bg-[#dce6ee]', 'bg-[#60a0c0]'],
  ['w-[4px]', 'bg-[#8ba8c8]', ''], ['w-[58px]', 'bg-[#dde4ec]', ''], ['w-[64px]', 'bg-[#a3bfdd]', 'bg-[#5088b8]'],
  ['w-[64px]', 'bg-[#a3bfdd]', 'bg-[#203020]'], ['w-[58px]', 'bg-[#d8e0ea]', 'bg-[#d8b850]'], ['w-[3px]', 'bg-[#8ba8c8]', ''],
  ['w-[54px]', 'bg-[#dfe5ec]', 'bg-[#c83030]'], ['w-[9px]', 'bg-[#8ba8c8]', ''], ['w-[58px]', 'bg-[#e4e8ee]', 'bg-[#304050]'],
  ['w-[217px]', 'bg-[#8a9cb4]', ''], ['w-[15px]', 'bg-[#a8b4c2]', ''],
];

const TaskBar = () => (
  <div className="flex h-[7px] shrink-0 overflow-hidden bg-[#8ba8c8]">
    {TASKS.map(([width, bg, glyph], i) => (
      <div key={i} className={`flex shrink-0 items-end justify-center border-t border-[#1f2c40] ${width} ${bg}`}>
        {glyph && <i className={`block h-[3px] w-[24px] rounded-t-[3px] ${glyph}`} />}
      </div>
    ))}
  </div>
);

const App = () => {
  return (
    <div className="flex h-[768px] w-[1280px] flex-col overflow-hidden bg-[#2d3e5c] font-['Open_Sans',sans-serif] leading-4">
      <TitleBar />
      <MenuBar />
      <ToolBars />
      <div className="flex h-[667px] shrink-0 bg-[radial-gradient(#34476a_0.7px,transparent_0.8px)] bg-size-[4px_4px]">
        <div className="flex w-[28px] shrink-0 flex-col gap-[4px] pt-[6px] text-[12px] tracking-[-0.3px] text-white">
          <div className="flex h-[52px] w-[19px] justify-center rounded-r-sm bg-[#465a7d] pt-[5px] leading-[17px] [writing-mode:vertical-rl]">Layouts</div>
          <div className="flex h-[46px] w-[19px] justify-center rounded-r-sm bg-[#465a7d] pt-[1px] leading-[17px] [writing-mode:vertical-rl]">Charts</div>
        </div>
        <div className="flex w-[1220px] shrink-0 flex-col">
          <TabStrip />
          <div className="flex h-[636px] flex-col border-x border-t-2 border-b-2 border-[#ffe8a6]">
            <ChartTitle />
            <Chart />
            <SheetTabs />
          </div>
        </div>
        <div className="w-[6px] shrink-0" />
        <SideBar />
      </div>
      <StatusBar />
      <TaskBar />
    </div>
  );
};

export default App;
